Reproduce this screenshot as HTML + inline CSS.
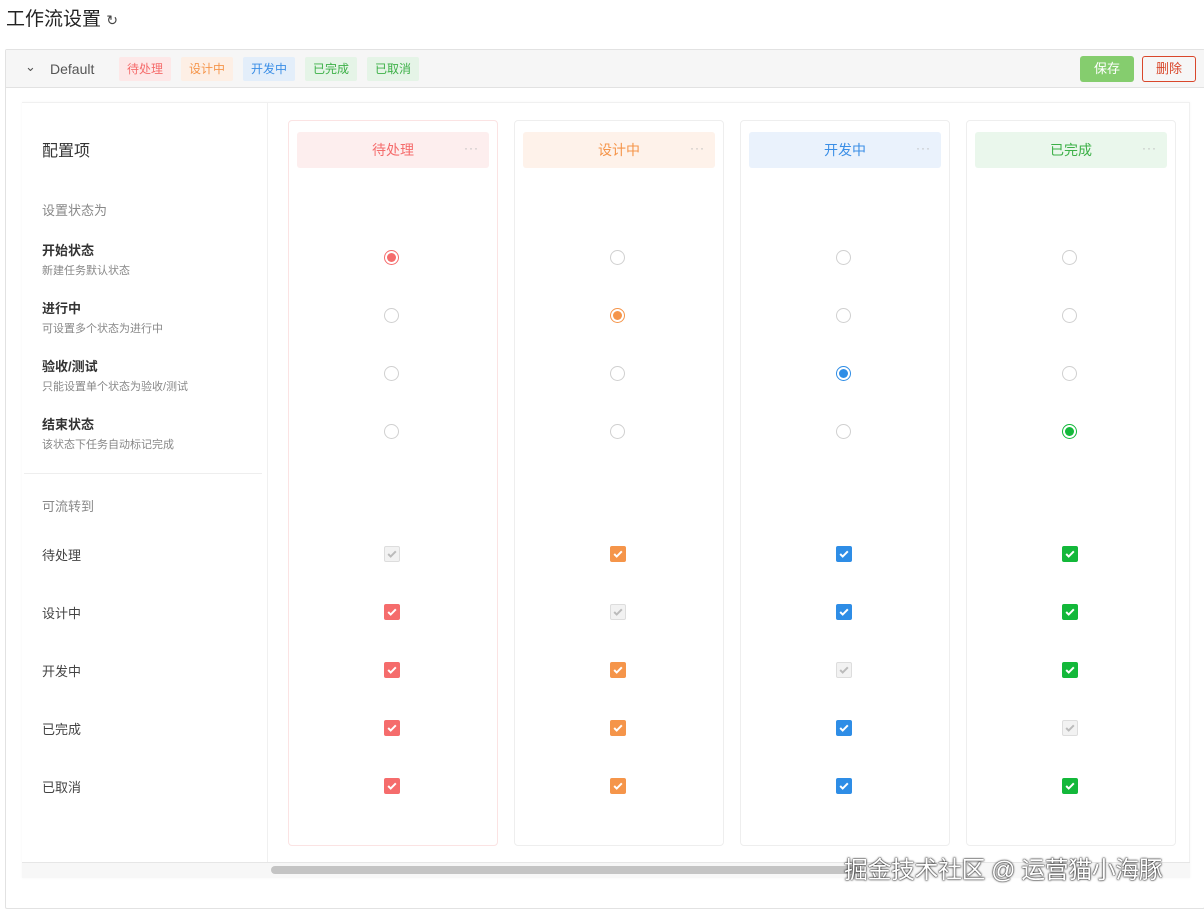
<!DOCTYPE html>
<html><head><meta charset="utf-8"><style>
*{box-sizing:border-box;margin:0;padding:0}
body{width:1204px;height:906px;background:#fff;font-family:"Liberation Sans","Noto Sans CJK SC",sans-serif;position:relative;overflow:hidden;color:#333}
.a{position:absolute}
.tag{position:absolute;top:57px;height:24px;line-height:24px;font-size:12px;padding:0 8px;border-radius:2px}
.card{position:absolute;top:120px;width:210px;height:726px;border:1px solid #eee;border-radius:4px}
.pill{position:absolute;left:8px;top:11px;width:192px;height:36px;line-height:36px;text-align:center;font-size:14px;border-radius:3px}
.dots{position:absolute;right:10px;top:-2px;font-size:12px;color:#bbb;letter-spacing:1px}
.r{position:absolute;width:15px;height:15px;border-radius:50%;border:1px solid #d0d0d0;background:#fff}
.r.on::after{content:"";position:absolute;left:2px;top:2px;width:9px;height:9px;border-radius:50%;background:var(--c)}
.r.on{border-color:var(--c)}
.c{position:absolute;width:16px;height:16px;border-radius:2px;background:var(--c)}
.c svg{position:absolute;left:2px;top:2px}
.c.dis{background:#f2f2f2;border:1px solid #ddd}
.c.dis svg{left:1px;top:1px}
.lb{position:absolute;left:42px;font-size:13px;color:#444}
.lb b{display:block;font-size:13px;color:#333}
.lb span{display:block;font-size:11px;color:#888;margin-top:3px}
</style></head><body>
<div class="a" style="left:6px;top:4px;font-size:19px;color:#222">工作流设置 <span style="font-size:14px;color:#444">↻</span></div>
<div class="a" style="left:5px;top:49px;width:1200px;height:860px;border:1px solid #e2e2e2;border-radius:2px"></div>
<div class="a" style="left:6px;top:50px;width:1198px;height:38px;background:#f6f6f6;border-bottom:1px solid #e2e2e2"></div>
<div class="a" style="left:25px;top:59px;font-size:13px;color:#555">⌄</div>
<div class="a" style="left:50px;top:61px;font-size:14px;color:#555">Default</div>
<div class="tag" style="left:119px;background:#fde8e8;color:#f56c6c">待处理</div>
<div class="tag" style="left:181px;background:#fdefe5;color:#f5954a">设计中</div>
<div class="tag" style="left:243px;background:#e3eefa;color:#3a8ee6">开发中</div>
<div class="tag" style="left:305px;background:#e5f4e7;color:#3cb047">已完成</div>
<div class="tag" style="left:367px;background:#e5f4e7;color:#3cb047">已取消</div>
<div class="a" style="left:1080px;top:56px;width:54px;height:26px;background:#85cd6e;color:#fff;border-radius:3px;font-size:13px;text-align:center;line-height:26px">保存</div>
<div class="a" style="left:1142px;top:56px;width:54px;height:26px;border:1px solid #d9472b;color:#d9472b;border-radius:3px;font-size:13px;text-align:center;line-height:24px">删除</div>
<div class="a" style="left:22px;top:102px;width:1168px;height:776px;border-top:1px solid #f0f0f0;border-right:1px solid #f0f0f0;box-shadow:0 0 3px rgba(0,0,0,.04)"></div>
<div class="a" style="left:267px;top:103px;width:1px;height:760px;background:#f0f0f0"></div>
<div class="a" style="left:24px;top:473px;width:238px;height:1px;background:#eee"></div>
<div class="a" style="left:42px;top:137px;font-size:16px;color:#333">配置项</div>
<div class="lb" style="top:200px;color:#888">设置状态为</div>
<div class="lb" style="top:240px"><b>开始状态</b><span>新建任务默认状态</span></div>
<div class="lb" style="top:298px"><b>进行中</b><span>可设置多个状态为进行中</span></div>
<div class="lb" style="top:356px"><b>验收/测试</b><span>只能设置单个状态为验收/测试</span></div>
<div class="lb" style="top:414px"><b>结束状态</b><span>该状态下任务自动标记完成</span></div>
<div class="lb" style="top:496px;color:#888">可流转到</div>
<div class="lb" style="top:545px">待处理</div>
<div class="lb" style="top:603px">设计中</div>
<div class="lb" style="top:661px">开发中</div>
<div class="lb" style="top:719px">已完成</div>
<div class="lb" style="top:777px">已取消</div>
<div class="card" style="left:288px;border-color:#fbe3e3"><div class="pill" style="background:#fdeeee;color:#f56c6c">待处理<span class="dots">···</span></div></div>
<div class="card" style="left:514px"><div class="pill" style="background:#fef2ea;color:#f5954a">设计中<span class="dots">···</span></div></div>
<div class="card" style="left:740px"><div class="pill" style="background:#eaf2fc;color:#3a8ee6">开发中<span class="dots">···</span></div></div>
<div class="card" style="left:966px"><div class="pill" style="background:#eaf7ec;color:#3cb047">已完成<span class="dots">···</span></div></div>
<div id="g"></div>
<div class="a" style="left:22px;top:862px;width:1168px;height:16px;background:#f7f7f7;border-top:1px solid #e6e6e6"></div>
<div class="a" style="left:271px;top:866px;width:590px;height:8px;background:#c4c4c4;border-radius:4px"></div>
<div class="a" style="left:844px;top:850px;font-size:24px;color:#fff;text-shadow:0 0 2px #000,0 0 1px #000;white-space:nowrap;letter-spacing:-0.5px">掘金技术社区 @ 运营猫小海豚</div>
<script>
var xs=[392,618,844,1070],cs=['#f56c6c','#f5954a','#2e8de6','#13b83a'],ry=[258,316,374,432],cy=[554,612,670,728,786],h='';
var ck='<svg width="12" height="12" viewBox="0 0 11 11"><path d="M2 5.5l2.3 2.3L9 3" fill="none" stroke="COL" stroke-width="1.8"/></svg>';
for(var i=0;i<4;i++){for(var j=0;j<4;j++)h+='<div class="r'+(i==j?' on':'')+'" style="--c:'+cs[i]+';left:'+(xs[i]-8)+'px;top:'+(ry[j]-8)+'px"></div>';
for(var j=0;j<5;j++){var d=i==j;h+='<div class="c'+(d?' dis':'')+'" style="--c:'+cs[i]+';left:'+(xs[i]-8)+'px;top:'+(cy[j]-8)+'px">'+ck.replace('COL',d?'#bbb':'#fff')+'</div>';}}
document.getElementById('g').innerHTML=h;
</script>
</body></html>
